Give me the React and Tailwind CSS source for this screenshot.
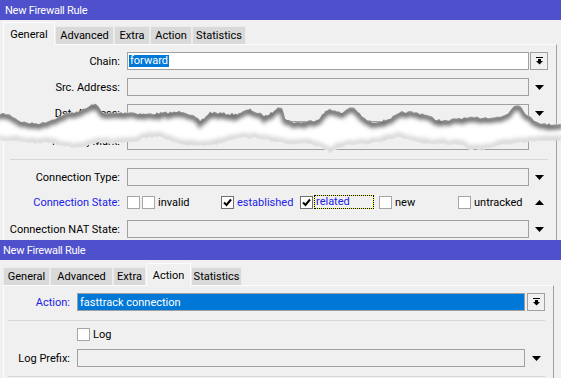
import React from 'react';

function DownArrow() {
  return (
    <svg width="9" height="5" viewBox="0 0 9 5">
      <polygon points="0,0 9,0 4.5,5" fill="#000" />
    </svg>
  );
}

function UpArrow() {
  return (
    <svg width="9" height="5" viewBox="0 0 9 5">
      <polygon points="0,5 9,5 4.5,0" fill="#000" />
    </svg>
  );
}

function DropButton() {
  return (
    <div className="w-[18px] h-[18px] border border-[#a0a0a0] flex items-center justify-center">
      <svg width="7" height="8" viewBox="0 0 7 8">
        <rect x="0" y="0" width="7" height="1" fill="#000" />
        <rect x="2" y="2" width="3" height="2" fill="#000" />
        <polygon points="0,4 7,4 3.5,7.5" fill="#000" />
      </svg>
    </div>
  );
}

function Check({ checked }) {
  return (
    <span
      className={`w-[13px] h-[13px] shrink-0 bg-white border flex items-center justify-center ${
        checked ? 'border-[#707070]' : 'border-[#a6a6a6]'
      }`}
    >
      {checked && (
        <svg width="9" height="9" viewBox="0 0 9 9">
          <polyline points="1,4.5 3.5,7 8,1.5" fill="none" stroke="#000" strokeWidth="2" />
        </svg>
      )}
    </span>
  );
}

function Tabs({ tabs }) {
  return (
    <div className="h-[24px] flex items-end pl-[3px]">
      {tabs.map((t) =>
        t.sel ? (
          <div
            key={t.label}
            style={{ width: t.w }}
            className="relative z-10 -mb-[1px] h-[23px] bg-[#f0f0f0] border border-b-0 border-[#fcfcfc] flex items-center justify-center"
          >
            {t.label}
          </div>
        ) : (
          <div
            key={t.label}
            style={{ width: t.w }}
            className="h-[18px] bg-[#d9d9d9] border border-b-0 border-[#ececec] flex items-center justify-center"
          >
            {t.label}
          </div>
        )
      )}
    </div>
  );
}

function TitleBar({ pad }) {
  return (
    <div className={`h-[20px] bg-[#4f50cb] text-white flex items-center tracking-[-0.25px] ${pad}`}>
      New Firewall Rule
    </div>
  );
}

function TopRow({ label, blue, field, tail, className = '' }) {
  return (
    <div className={`flex items-center h-[18px] ${className}`}>
      <div className={`w-[116px] text-right whitespace-nowrap ${blue ? 'text-[#2020e8]' : ''}`}>{label}</div>
      <div className="ml-[7px] w-[402px] h-[18px]">{field}</div>
      <div className="ml-[1px] w-[18px] h-[18px] flex items-center justify-center">{tail}</div>
    </div>
  );
}

const emptyField = <div className="w-full h-full border border-[#a0a0a0]" />;

// torn paper drawing
function rng(seed) {
  let s = seed;
  return () => {
    s = (s * 16807) % 2147483647;
    return s / 2147483647;
  };
}

function jag(keys, amp, seed) {
  const r = rng(seed);
  const out = [];
  for (let i = 0; i < keys.length - 1; i++) {
    const [x0, y0] = keys[i];
    const [x1, y1] = keys[i + 1];
    for (let x = x0; x < x1; x += 2) {
      const t = (x - x0) / (x1 - x0);
      out.push([x, y0 + (y1 - y0) * t + (r() - 0.5) * amp]);
    }
  }
  out.push(keys[keys.length - 1]);
  return out;
}

const TOP_EDGE = jag(
  [
    [-2, 113], [8, 114], [14, 117], [20, 121], [30, 123], [42, 123], [50, 120], [58, 117], [66, 114],
    [74, 112], [82, 110], [88, 107], [93, 104], [97, 105], [101, 110], [106, 114], [115, 113], [130, 112],
    [145, 114], [160, 113], [175, 112], [183, 111], [188, 113], [195, 117], [200, 121], [204, 118],
    [210, 112], [220, 113], [235, 114], [245, 111], [250, 109], [256, 112], [265, 116], [272, 112],
    [278, 106], [282, 108], [285, 118], [292, 122], [305, 122], [318, 119], [325, 112], [330, 108],
    [335, 111], [342, 113], [348, 108], [352, 107], [358, 112], [365, 119], [372, 122], [385, 120],
    [395, 116], [402, 112], [412, 112], [425, 114], [435, 119], [447, 121], [458, 118], [470, 118],
    [485, 117], [500, 117], [508, 113], [514, 105], [518, 104], [522, 108], [528, 116], [536, 121],
    [545, 124], [563, 124],
  ],
  2.5,
  7
);

const BOTTOM_EDGE = jag(
  [
    [-2, 140], [20, 141], [30, 143], [48, 143], [55, 144], [65, 147], [80, 148], [90, 145], [95, 143],
    [110, 143], [125, 143], [138, 141], [145, 138], [160, 137], [170, 141], [185, 145], [200, 146],
    [215, 145], [230, 141], [245, 138], [262, 139], [275, 142], [290, 145], [310, 144], [322, 148],
    [330, 153], [338, 148], [350, 145], [370, 144], [385, 141], [398, 137], [410, 141], [425, 144],
    [445, 144], [460, 145], [470, 149], [480, 151], [490, 148], [500, 145], [515, 144], [530, 142],
    [545, 141], [563, 141],
  ],
  2.5,
  13
);

const pts = (a) => a.map(([x, y]) => `${x},${y.toFixed(1)}`).join(' ');
const REGION = pts(TOP_EDGE) + ' ' + pts([...BOTTOM_EDGE].reverse());

function Tear() {
  return (
    <svg className="absolute left-0 top-[96px]" width="561" height="62" viewBox="0 96 561 62">
      <defs>
        <clipPath id="tear">
          <polygon points={REGION} />
        </clipPath>
        <filter id="soft" filterUnits="userSpaceOnUse" x="-20" y="80" width="600" height="100">
          <feGaussianBlur stdDeviation="2" />
        </filter>
      </defs>
      <polygon points={REGION} fill="#fff" />
      <g clipPath="url(#tear)">
        <polyline points={pts(TOP_EDGE)} transform="translate(0 2)" fill="none" stroke="#707070" strokeWidth="6" filter="url(#soft)" />
        <polyline points={pts(BOTTOM_EDGE)} transform="translate(0 -2)" fill="none" stroke="#d6d6d6" strokeWidth="5" filter="url(#soft)" />
      </g>
    </svg>
  );
}

function StateOption({ checked, label, blue, focus }) {
  return (
    <div className="flex items-center">
      <Check checked={checked} />
      {focus ? (
        <span className="ml-[1px] w-[60px] h-[14px] border border-dotted border-black bg-[#ffff00] flex">
          <span className="flex-1 bg-[#f0f0f0] pl-[1px] leading-[12px] text-[#2020e8]">{label}</span>
        </span>
      ) : (
        <span className={`ml-[3px] ${blue ? 'text-[#2020e8]' : ''}`}>{label}</span>
      )}
    </div>
  );
}

function TopWindow() {
  return (
    <div className="relative h-[240px] overflow-hidden">
      <TitleBar pad="pl-[5px]" />
      <Tabs
        tabs={[
          { label: 'General', w: 52, sel: true },
          { label: 'Advanced', w: 59 },
          { label: 'Extra', w: 36 },
          { label: 'Action', w: 42 },
          { label: 'Statistics', w: 54 },
        ]}
      />
      <div className="ml-[3px] w-[554px] h-[200px] border-l border-t border-r border-l-[#fcfcfc] border-t-[#fcfcfc] border-r-[#a0a0a0] flex flex-col">
        <TopRow
          className="mt-[7px]"
          label="Chain:"
          field={
            <div className="w-full h-full border border-[#a0a0a0] bg-white flex items-center pl-[1px]">
              <span className="bg-[#0078d7] text-white px-[1px] leading-[12px]">forward</span>
            </div>
          }
          tail={<DropButton />}
        />
        <TopRow className="mt-[8px]" label="Src. Address:" field={emptyField} tail={<DownArrow />} />
        <TopRow className="mt-[8px]" label="Dst. Address:" field={emptyField} tail={<DownArrow />} />
        <TopRow className="mt-[10px]" label="Routing Mark:" field={emptyField} tail={null} />
        <div className="mt-[9px] ml-[6px] w-[538px] border-t border-[#d7d7d7]" />
        <TopRow className="mt-[8px]" label="Connection Type:" field={emptyField} tail={<DownArrow />} />
        <div className="mt-[7px] flex items-center h-[18px]">
          <div className="w-[116px] text-right whitespace-nowrap text-[#2020e8]">Connection State:</div>
          <div className="ml-[7px] flex items-center">
            <Check />
            <div className="ml-[2px] w-[387px] grid grid-cols-[79px_79px_79px_79px_1fr]">
              <StateOption label="invalid" />
              <StateOption checked blue label="established" />
              <StateOption checked focus label="related" />
              <StateOption label="new" />
              <StateOption label="untracked" />
            </div>
          </div>
          <div className="ml-[1px] w-[18px] flex items-center justify-center">
            <UpArrow />
          </div>
        </div>
        <TopRow className="mt-[9px]" label="Connection NAT State:" field={emptyField} tail={<DownArrow />} />
      </div>
      <Tear />
    </div>
  );
}

function BottomRow({ label, blue, field, tail, className = '' }) {
  return (
    <div className={`flex items-center h-[18px] ${className}`}>
      <div className={`w-[66px] text-right whitespace-nowrap ${blue ? 'text-[#2020e8]' : ''}`}>{label}</div>
      <div className="ml-[7px] w-[448px] h-[18px]">{field}</div>
      <div className="ml-[2px] w-[18px] h-[18px] flex items-center justify-center">{tail}</div>
    </div>
  );
}

function BottomWindow() {
  return (
    <div className="h-[138px] overflow-hidden">
      <TitleBar pad="pl-[3px]" />
      <div className="h-[1px]" />
      <Tabs
        tabs={[
          { label: 'General', w: 47 },
          { label: 'Advanced', w: 63 },
          { label: 'Extra', w: 33 },
          { label: 'Action', w: 45, sel: true },
          { label: 'Statistics', w: 51 },
        ]}
      />
      <div className="ml-[3px] w-[551px] h-[120px] border-l border-t border-r border-l-[#fcfcfc] border-t-[#fcfcfc] border-r-[#a0a0a0] flex flex-col">
        <BottomRow
          className="mt-[7px]"
          label="Action:"
          blue
          field={
            <div className="w-full h-full border border-[#a0a0a0] bg-[#0078d7] text-white flex items-center pl-[2px]">
              fasttrack connection
            </div>
          }
          tail={<DropButton />}
        />
        <div className="mt-[9px] ml-[4px] w-[537px] border-t border-[#d7d7d7]" />
        <div className="mt-[7px] h-[13px] flex items-center pl-[73px]">
          <Check />
          <span className="ml-[3px]">Log</span>
        </div>
        <BottomRow className="mt-[8px]" label="Log Prefix:" field={emptyField} tail={<DownArrow />} />
        <div className="mt-[9px] ml-[4px] w-[537px] border-t border-[#d7d7d7]" />
      </div>
    </div>
  );
}

export default function App() {
  return (
    <div className="w-[561px] h-[378px] overflow-hidden bg-[#f0f0f0] text-black text-[11px] leading-[13px] font-[Roboto,sans-serif]">
      <TopWindow />
      <BottomWindow />
    </div>
  );
}
